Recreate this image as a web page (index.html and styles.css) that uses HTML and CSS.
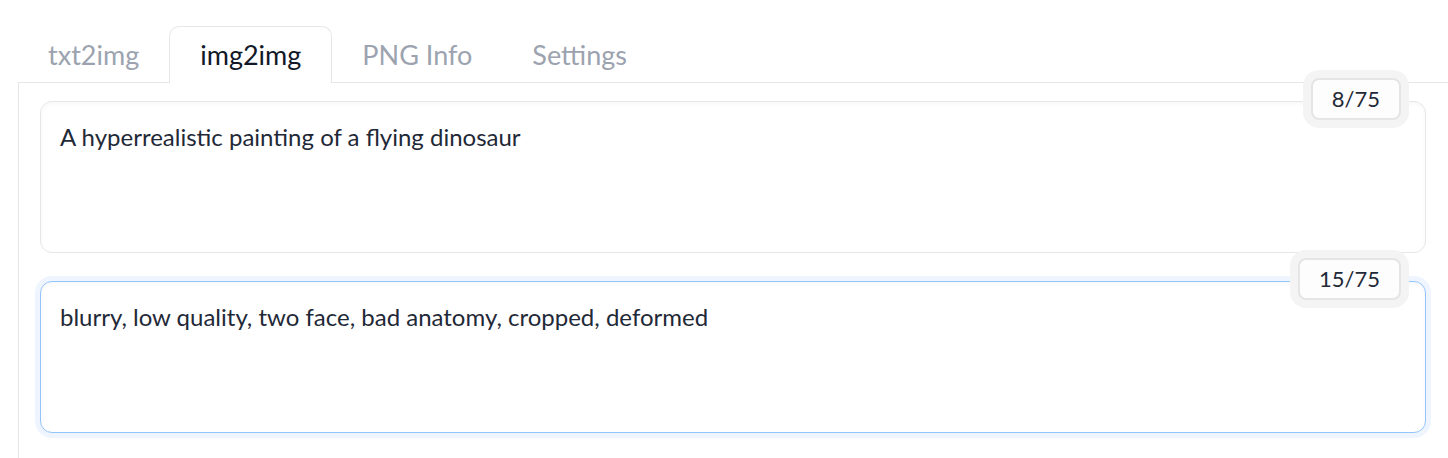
FILE: index.html
```html
<!DOCTYPE html>
<html lang="en">
<head>
<meta charset="utf-8">
<title>img2img</title>
<link rel="stylesheet" href="styles.css">
</head>
<body>
<div class="tabnav">
  <div class="tab">txt2img</div>
  <div class="tab active">img2img</div>
  <div class="tab">PNG Info</div>
  <div class="tab">Settings</div>
</div>
<div class="panel">
  <div class="field">
    <textarea class="prompt" readonly>A hyperrealistic painting of a flying dinosaur</textarea>
    <span class="counter">8/75</span>
  </div>
  <div class="field">
    <textarea class="prompt focused" readonly>blurry, low quality, two face, bad anatomy, cropped, deformed</textarea>
    <span class="counter">15/75</span>
  </div>
</div>
</body>
</html>
```
FILE: styles.css
```css
html, body {
  margin: 0;
  background: #ffffff;
}
body {
  font-family: Lato, "Liberation Sans", sans-serif;
  color: #1f2937;
  height: 100vh;
  display: flex;
  flex-direction: column;
  overflow: hidden;
}
.tabnav {
  display: flex;
  margin-left: 18px;
  padding-top: 26px;
  border-bottom: 1px solid #e5e7eb;
}
.tab {
  height: 56px;
  box-sizing: border-box;
  padding: 0 29px;
  border: 1px solid transparent;
  border-bottom: none;
  border-radius: 10px 10px 0 0;
  margin-bottom: -1px;
  font-size: 27px;
  line-height: 56px;
  color: #9ca3af;
}
.tab.active {
  height: 57px;
  padding: 0 30px;
  border-color: #e5e7eb;
  background: #ffffff;
  color: #111827;
}
.panel {
  flex: 1;
  margin-left: 18px;
  border-left: 1px solid #e5e7eb;
  padding: 18px 22px 0 21px;
}
.field {
  position: relative;
}
.field + .field {
  margin-top: 28px;
}
.prompt {
  display: block;
  width: 100%;
  height: 152px;
  box-sizing: border-box;
  margin: 0;
  padding: 17px 19px;
  border: 1px solid #e5e7eb;
  border-radius: 12px;
  background: #ffffff;
  box-shadow: inset 0 2px 4px rgba(0, 0, 0, 0.03);
  font-family: Lato, "Liberation Sans", sans-serif;
  font-size: 24px;
  line-height: 36px;
  color: #1f2937;
  resize: none;
  outline: none;
}
.prompt.focused {
  border-color: #93c5fd;
  box-shadow: 0 0 0 5px #eef5ff, inset 0 2px 4px rgba(0, 0, 0, 0.03);
}
.counter {
  position: absolute;
  top: -23px;
  right: 25px;
  height: 42px;
  box-sizing: border-box;
  padding: 0 19px;
  border: 2px solid #e5e5e5;
  border-radius: 8px;
  background: #fdfdfd;
  box-shadow: 0 0 0 8px #f4f4f4;
  font-size: 22px;
  line-height: 38px;
  color: #1f2937;
}
```
